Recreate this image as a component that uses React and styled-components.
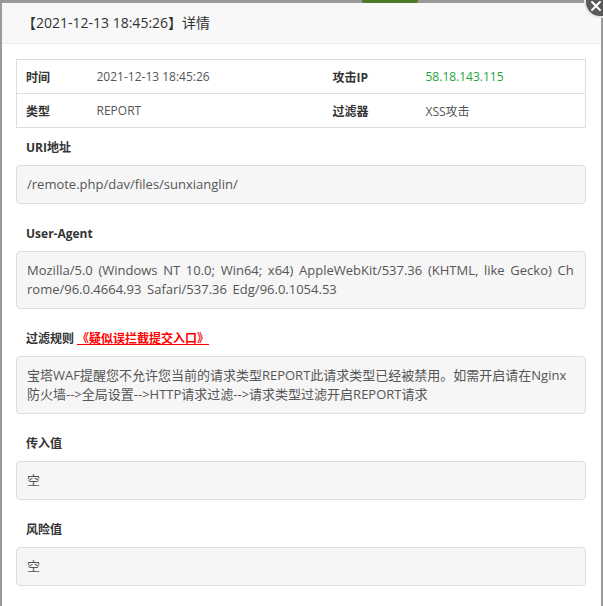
import React from 'react';
import styled, { createGlobalStyle } from 'styled-components';

const GlobalStyle = createGlobalStyle`
  html, body {
    margin: 0;
    padding: 0;
    background: #9a9a9a;
  }
  body {
    font-family: "Open Sans", "Noto Sans CJK SC", sans-serif;
    color: #333;
  }
`;

const info = [
  [
    { label: '时间', value: '2021-12-13 18:45:26' },
    { label: '攻击IP', value: '58.18.143.115', green: true },
  ],
  [
    { label: '类型', value: 'REPORT' },
    { label: '过滤器', value: 'XSS攻击' },
  ],
];

const sections = [
  { title: 'URI地址', text: '/remote.php/dav/files/sunxianglin/' },
  {
    title: 'User-Agent',
    text: 'Mozilla/5.0 (Windows NT 10.0; Win64; x64) AppleWebKit/537.36 (KHTML, like Gecko) Chrome/96.0.4664.93 Safari/537.36 Edg/96.0.1054.53',
  },
  {
    title: '过滤规则',
    link: '《疑似误拦截提交入口》',
    text: '宝塔WAF提醒您不允许您当前的请求类型REPORT此请求类型已经被禁用。如需开启请在Nginx防火墙-->全局设置-->HTTP请求过滤-->请求类型过滤开启REPORT请求',
  },
  { title: '传入值', text: '空' },
  { title: '风险值', text: '空' },
];

const App = () => {
  return (
    <>
      <GlobalStyle />
      <Page>
        <Blob />
        <Modal>
          <CloseButton aria-label="close">
            <svg width="12" height="12" viewBox="0 0 12 12">
              <path d="M2 2 L10 10 M10 2 L2 10" stroke="#fff" strokeWidth="2" strokeLinecap="round" />
            </svg>
          </CloseButton>
          <Header>【2021-12-13 18:45:26】详情</Header>
          <Body>
            <InfoTable>
              <colgroup>
                <col style={{ width: 70 }} />
                <col style={{ width: 237 }} />
                <col style={{ width: 92 }} />
                <col />
              </colgroup>
              <tbody>
                {info.map((row, i) => (
                  <tr key={i}>
                    {row.map((cell) => (
                      <React.Fragment key={cell.label}>
                        <Label>{cell.label}</Label>
                        <Value $green={cell.green}>{cell.value}</Value>
                      </React.Fragment>
                    ))}
                  </tr>
                ))}
              </tbody>
            </InfoTable>
            {sections.map((s) => (
              <Section key={s.title}>
                <Title>
                  {s.title}
                  {s.link && <RuleLink href="#">{s.link}</RuleLink>}
                </Title>
                <Box>{s.text}</Box>
              </Section>
            ))}
          </Body>
        </Modal>
      </Page>
    </>
  );
};

const Page = styled.div`
  position: relative;
  height: 606px;
  overflow: hidden;
  padding: 3px 0 0 2px;
  box-sizing: border-box;
`;

const Blob = styled.div`
  position: absolute;
  left: 360px;
  top: -40px;
  width: 60px;
  height: 60px;
  border-radius: 50%;
  background: #4b7a2a;
`;

const Modal = styled.div`
  position: relative;
  width: 599px;
  height: 620px;
  background: #fff;
`;

const CloseButton = styled.button`
  position: absolute;
  left: 582px;
  top: -17px;
  width: 32px;
  height: 32px;
  border-radius: 50%;
  border: 2px solid #e6e6e6;
  background: #5a5a5a;
  padding: 0;
  display: flex;
  align-items: center;
  justify-content: center;
  z-index: 2;
  svg {
    margin: 8px 8px 0 0;
  }
`;

const Header = styled.div`
  height: 40px;
  line-height: 40px;
  padding-left: 20px;
  background: #f8f8f8;
  border-bottom: 1px solid #eee;
  font-size: 14px;
  color: #333;
`;

const Body = styled.div`
  padding: 15px 15px 0 14px;
`;

const InfoTable = styled.table`
  width: 100%;
  table-layout: fixed;
  border-collapse: collapse;
  border: 1px solid #ddd;
  font-size: 12px;
  tr + tr td {
    border-top: 1px solid #ddd;
  }
`;

const Label = styled.td`
  height: 33px;
  padding: 0 0 0 9px;
  font-weight: bold;
  color: #333;
`;

const Value = styled.td`
  padding: 0 0 0 10px;
  color: ${(p) => (p.$green ? '#20a53a' : '#555')};
`;

const Section = styled.div`
  margin-top: 20px;
  &:first-of-type {
    margin-top: 10px;
  }
`;

const Title = styled.div`
  font-size: 12px;
  font-weight: bold;
  line-height: 19px;
  padding-left: 10px;
  margin-bottom: 8px;
  color: #333;
`;

const RuleLink = styled.a`
  margin-left: 3px;
  color: #f00;
  text-decoration: underline;
`;

const Box = styled.div`
  padding: 9px 9px 9px 10px;
  background: #f6f6f6;
  border: 1px solid #ddd;
  border-radius: 4px;
  font-size: 13px;
  line-height: 19px;
  word-spacing: 2.3px;
  color: #555;
  word-break: break-all;
`;

export default App;
